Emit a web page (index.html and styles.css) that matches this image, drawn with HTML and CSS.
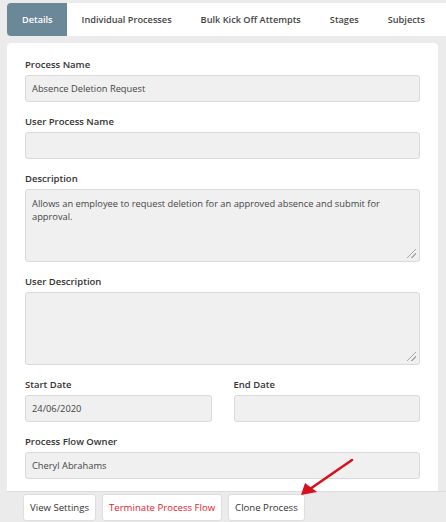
FILE: index.html
```html
<!DOCTYPE html>
<html>
<head>
<meta charset="utf-8">
<link rel="stylesheet" href="styles.css">
</head>
<body>
<div class="page">
  <nav class="tabs">
    <span class="tab active">Details</span>
    <span class="tab">Individual Processes</span>
    <span class="tab">Bulk Kick Off Attempts</span>
    <span class="tab">Stages</span>
    <span class="tab">Subjects</span>
  </nav>
  <section class="panel">
    <div class="body">
      <div class="field">
        <label class="label">Process Name</label>
        <input class="input" type="text" value="Absence Deletion Request" readonly>
      </div>
      <div class="field">
        <label class="label">User Process Name</label>
        <input class="input" type="text" value="" readonly>
      </div>
      <div class="field">
        <label class="label">Description</label>
        <textarea class="input area" readonly>Allows an employee to request deletion for an approved absence and submit for approval.</textarea>
      </div>
      <div class="field">
        <label class="label">User Description</label>
        <textarea class="input area" readonly></textarea>
      </div>
      <div class="row">
        <div class="field">
          <label class="label">Start Date</label>
          <input class="input" type="text" value="24/06/2020" readonly>
        </div>
        <div class="field">
          <label class="label">End Date</label>
          <input class="input" type="text" value="" readonly>
        </div>
      </div>
      <div class="field">
        <label class="label">Process Flow Owner</label>
        <input class="input" type="text" value="Cheryl Abrahams" readonly>
      </div>
    </div>
    <div class="footer">
      <button class="btn">View Settings</button>
      <button class="btn danger">Terminate Process Flow</button>
      <button class="btn">Clone Process</button>
    </div>
  </section>
</div>
<svg class="arrow" width="446" height="522" viewBox="0 0 446 522">
  <line x1="352" y1="460" x2="310" y2="489" stroke="#d6101c" stroke-width="2.6" stroke-linecap="round"/>
  <polygon points="301,495 305,483 317,492" fill="#d6101c"/>
</svg>
</body>
</html>
```
FILE: styles.css
```css
* { box-sizing: border-box; }
html, body { margin: 0; padding: 0; }
body {
  background: #ebebeb;
  font-family: "Open Sans", "Liberation Sans", sans-serif;
  color: #333;
  width: 446px;
  height: 522px;
  overflow: hidden;
  position: relative;
}
.page {
  padding: 3px 0 0 7px;
}
.tabs {
  display: flex;
  background: #fff;
  height: 33px;
  border-radius: 4px 0 0 4px;
}
.tab {
  display: flex;
  align-items: center;
  padding: 0 14.5px;
  font-size: 9.2px;
  font-weight: 600;
  color: #444;
  white-space: nowrap;
}
.tab.active {
  background: #6b8898;
  color: #fff;
  border-radius: 4px 0 0 4px;
  padding: 0 14.5px 0 15px;
}
.panel {
  margin-top: 7px;
  margin-right: 8px;
  background: #fff;
  border-radius: 4px 4px 0 0;
}
.body {
  padding: 15px 18px 12px 18px;
  display: flex;
  flex-direction: column;
  gap: 13px;
}
.field {
  display: flex;
  flex-direction: column;
  gap: 3px;
}
.row {
  display: grid;
  grid-template-columns: 1fr 1fr;
  gap: 22px;
}
.label {
  font-size: 9.5px;
  font-weight: 600;
  line-height: 14px;
  color: #333;
}
.input {
  height: 27px;
  border: 1px solid #dadada;
  background-color: #f0f0f0;
  border-radius: 3px;
  padding: 0 6px;
  font-family: inherit;
  font-size: 9.3px;
  color: #444;
  outline: none;
  width: 100%;
}
.area {
  height: 73px;
  padding: 7px 6px;
  line-height: 13px;
  resize: none;
  background-image: linear-gradient(135deg, transparent 46%, #a8a8a8 46%, #a8a8a8 54%, transparent 54%, transparent 72%, #a8a8a8 72%, #a8a8a8 80%, transparent 80%);
  background-repeat: no-repeat;
  background-size: 9px 9px;
  background-position: right 3px bottom 3px;
}
.footer {
  border-top: 1px solid #dcdcdc;
  background: #ebebeb;
  padding: 2px 0 3px 16px;
  display: flex;
  gap: 6px;
  margin-right: -8px;
}
.btn {
  height: 27px;
  background: #fff;
  border: 1px solid #dedede;
  border-radius: 3px;
  padding: 0 6px;
  font-family: inherit;
  font-size: 9.6px;
  color: #333;
}
.btn.danger { color: #e5202e; }
.arrow {
  position: absolute;
  left: 0;
  top: 0;
  pointer-events: none;
}
```
